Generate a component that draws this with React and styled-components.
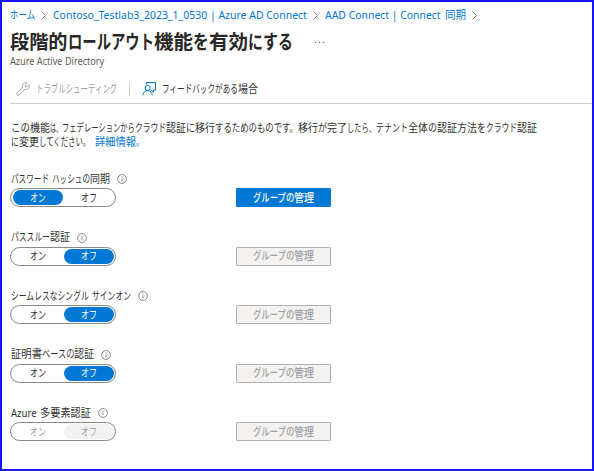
import React, { useLayoutEffect, useRef, useState } from "react";
import styled, { createGlobalStyle, css } from "styled-components";

const GlobalStyle = createGlobalStyle`
  * { box-sizing: border-box; }
  body { margin: 0; background: #fff; }
`;

const BLUE = "#0078d4";

const Frame = styled.main`
  width: 594px;
  height: 471px;
  padding-left: 8px;
  border: 2px solid #1414ff;
  background: #fff;
  color: #323130;
  font-family: "Noto Sans", "Noto Sans CJK JP", sans-serif;
  font-size: 11px;
  overflow: hidden;
`;

const Line = styled.span`
  display: flex;
  height: ${(p) => p.$height || 14}px;
  line-height: ${(p) => p.$height || 14}px;
  white-space: pre;
`;

const Slot = styled.span`
  display: block;
  flex: none;
  width: ${(p) => p.$width}px;
`;

const Glyphs = styled.span`
  display: inline-block;
  white-space: pre;
  transform-origin: 0 50%;
`;

/* Condenses a run of text so that it takes exactly the given width. */
function Run({ text, width }) {
  const ref = useRef(null);
  const [scale, setScale] = useState(1);
  useLayoutEffect(() => {
    setScale(width / ref.current.offsetWidth);
  }, [text, width]);
  return (
    <Slot $width={width}>
      <Glyphs ref={ref} style={{ transform: `scaleX(${scale})` }}>{text}</Glyphs>
    </Slot>
  );
}

function Runs({ parts, height }) {
  return (
    <Line $height={height}>
      {parts.map(([text, width], i) => <Run key={i} text={text} width={width} />)}
    </Line>
  );
}

const Breadcrumb = styled.nav`
  display: flex;
  align-items: center;
  height: 16px;
  margin-top: 5px;
  font-size: 11.5px;
`;

const Crumb = styled.a`
  color: ${BLUE};
  text-decoration: none;
`;

const Chevron = styled.svg`
  flex: none;
  width: 5px;
  height: 9px;
  margin: 1px 7px 0 6px;
  fill: none;
  stroke: #8a8886;
`;

const TitleRow = styled.header`
  display: flex;
  align-items: center;
  height: 28px;
  margin-top: 5px;
`;

const Title = styled.h1`
  margin: 0;
  color: #292827;
  font-size: 19.5px;
  font-weight: 600;
`;

const More = styled.svg`
  width: 11px;
  height: 3px;
  margin: 1px 0 0 21px;
  fill: #706e6c;
`;

const Subtitle = styled.div`
  height: 14px;
  margin-top: -2px;
  color: #605e5c;
  font-size: 10px;
`;

const Toolbar = styled.div`
  display: flex;
  align-items: center;
  height: 36px;
  padding: 7px 0 0 6px;
  border-bottom: 1px solid #d2d0ce;
`;

const Command = styled.button`
  display: flex;
  align-items: center;
  gap: 6px;
  padding: 0;
  border: 0;
  background: none;
  color: ${(p) => (p.disabled ? "#a19f9d" : "#323130")};
  font: inherit;
`;

const Separator = styled.span`
  width: 1px;
  height: 14px;
  margin: 0 12px;
  background: #d2d0ce;
`;

const CommandIcon = styled.svg`
  width: 14px;
  height: 14px;
  fill: none;
  stroke: ${(p) => p.$color};
`;

const Description = styled.p`
  margin: 17px 0 0 1px;
`;

const DescriptionTail = styled.span`
  display: flex;
  gap: 5px;
`;

const Settings = styled.section`
  display: grid;
  grid-auto-rows: 58.6px;
  margin-top: 22px;
`;

const Setting = styled.div`
  display: grid;
  grid-template-columns: 226px 95px;
  grid-template-rows: 17px 19px;
`;

const Label = styled.div`
  display: flex;
  grid-column: 1 / -1;
  align-items: center;
  gap: 7px;
  height: 15px;
  padding-left: 1px;
`;

const Info = styled.svg`
  width: 10px;
  height: 10px;
  margin-top: 1px;
  fill: none;
  stroke: #706e6c;
  stroke-width: 0.8;
`;

const Switch = styled.div`
  display: flex;
  gap: 1px;
  width: 106px;
  height: 19px;
  padding: 1px 1px 1px 2px;
  border: 1px solid #8a8886;
  border-radius: 10px;
`;

const Option = styled.button`
  display: flex;
  align-items: center;
  justify-content: center;
  width: 50px;
  height: 15px;
  padding: 0;
  border: 0;
  border-radius: 8px;
  background: none;
  color: ${(p) => (p.disabled ? "#a19f9d" : "#323130")};
  font: inherit;
  ${(p) => p.$selected && css`
    background: ${p.disabled ? "#f3f2f1" : BLUE};
    color: ${p.disabled ? "#a19f9d" : "#fff"};
  `}
`;

const ManageButton = styled.button`
  display: flex;
  align-items: center;
  justify-content: center;
  width: 95px;
  height: 19px;
  padding: 0;
  border: 1px solid ${(p) => (p.disabled ? "#b3b0ad" : BLUE)};
  border-radius: 1px;
  background: ${(p) => (p.disabled ? "#f3f2f1" : BLUE)};
  color: ${(p) => (p.disabled ? "#a19f9d" : "#fff")};
  font: inherit;
  font-weight: 500;
`;

const Sep = () => <Chevron viewBox="0 0 5 9"><path d="M.5.5l4 4-4 4" /></Chevron>;

const settings = [
  { label: [["パスワード", 38], [" ", 3], ["ハッシュの", 38], ["同期", 20]], on: true },
  { label: [["パススルー", 39], ["認証", 20]] },
  { label: [["シームレスなシングル", 78], [" ", 3], ["サインオン", 39]] },
  { label: [["証明書", 31], ["ベースの", 32], ["認証", 20]] },
  { label: [["Azure", 26], [" ", 3], ["多要素認証", 51]], disabled: true },
];

export default function App() {
  return (
    <Frame>
      <GlobalStyle />
      <Breadcrumb>
        <Crumb><Runs parts={[["ホーム", 25]]} height={16} /></Crumb>
        <Sep />
        <Crumb><Runs parts={[["Contoso_Testlab3_2023_1_0530 | Azure AD Connect", 254]]} height={16} /></Crumb>
        <Sep />
        <Crumb><Runs parts={[["AAD Connect | Connect", 116], [" ", 4], ["同期", 21]]} height={16} /></Crumb>
        <Sep />
      </Breadcrumb>
      <TitleRow>
        <Title>
          <Runs height={28} parts={[["段階的", 58], ["ロールアウト", 86], ["機能", 39], ["を", 16], ["有効", 39], ["にする", 45]]} />
        </Title>
        <More viewBox="0 0 11 3">
          <circle cx="1.5" cy="1.5" r=".8" /><circle cx="5.5" cy="1.5" r=".8" /><circle cx="9.5" cy="1.5" r=".8" />
        </More>
      </TitleRow>
      <Subtitle><Runs parts={[["Azure Active Directory", 94]]} /></Subtitle>
      <Toolbar>
        <Command disabled>
          <CommandIcon viewBox="0 0 14 14" $color="#a19f9d">
            <path d="M11.2.9a3.3 3.3 0 0 0-4.5 4.2L1.1 10.9a1.3 1.3 0 0 0 2 2l5.8-5.6a3.3 3.3 0 0 0 4.2-4.5l-2.2 2.1-1.5-.3-.3-1.5z" strokeWidth=".9" />
          </CommandIcon>
          <Runs parts={[["トラブルシューティング", 81]]} />
        </Command>
        <Separator />
        <Command>
          <CommandIcon viewBox="0 0 14 14" $color={BLUE}>
            <path d="M4.5 2.5v-2h9v7.5h-2v2.3L9.2 8" />
            <circle cx="5.7" cy="6" r="2.6" />
            <path d="M1 13.3c0-2.8 2-4.7 4.7-4.7s4.5 1.9 4.5 4.7" />
          </CommandIcon>
          <Runs parts={[["フィードバックがある", 76], ["場合", 20]]} />
        </Command>
      </Toolbar>
      <Description>
        <Runs parts={[
          ["この", 19], ["機能", 20], ["は、", 12], ["フェデレーションから", 73], ["クラウド", 31], ["認証", 20],
          ["に", 9], ["移行", 20], ["するためのものです。", 83], ["移行", 20], ["が", 9], ["完了", 20],
          ["したら、", 29], ["テナント", 32], ["全体", 20], ["の", 9], ["認証方法", 40], ["を", 9], ["クラウド", 31], ["認証", 20],
        ]} />
        <DescriptionTail>
          <Runs parts={[["に", 8], ["変更", 20], ["してください。", 51]]} />
          <Crumb><Runs parts={[["詳細情報", 41], ["。", 8]]} /></Crumb>
        </DescriptionTail>
      </Description>
      <Settings>
        {settings.map(({ label, on, disabled }, i) => (
          <Setting key={i}>
            <Label>
              <Runs parts={label} />
              <Info viewBox="0 0 10 10"><circle cx="5" cy="5" r="4.4" /><path d="M5 4.3v3M5 2.5v1" /></Info>
            </Label>
            <Switch>
              <Option $selected={on} disabled={disabled}><Runs parts={[["オン", 16]]} /></Option>
              <Option $selected={!on} disabled={disabled}><Runs parts={[["オフ", 16]]} /></Option>
            </Switch>
            <ManageButton disabled={!on}><Runs parts={[["グループの", 41], ["管理", 20]]} /></ManageButton>
          </Setting>
        ))}
      </Settings>
    </Frame>
  );
}
